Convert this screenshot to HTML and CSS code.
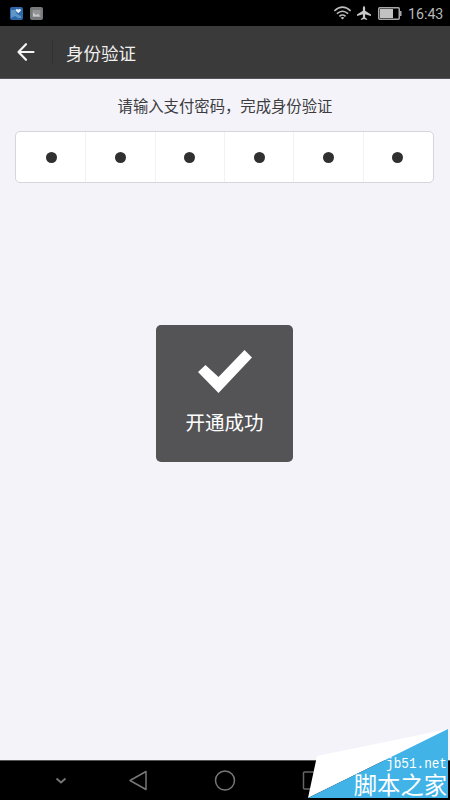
FILE: index.html
```html
<!DOCTYPE html>
<html lang="zh-CN">
<head>
<meta charset="UTF-8">
<title>身份验证</title>
<link rel="stylesheet" href="styles.css">
</head>
<body>
<div class="screen">
  <div class="status">
    <svg class="app-icon" viewBox="0 0 13 13"><rect width="13" height="13" rx="2" fill="#2d69a8"/><path d="M1 3h4l2 4 4 2v2H8L5 9 1 11z" fill="#82b3dc" opacity=".6"/><path d="M8.3 6.3 5.8 3.7c-.7-1.5 1.4-2.4 2.5-1 1.2-1.4 3.2-.5 2.5 1z" fill="#e5f1fa"/></svg>
    <svg class="app-icon" viewBox="0 0 13 13"><rect width="13" height="13" rx="2" fill="#77797b"/><rect x="2.5" y="3" width="8" height="7" fill="#929496"/><path d="M3 9.500V5.500l3 2.500 2-1 2.500 2.500z" fill="#c8c8c8"/></svg>
    <div class="status-right">
      <svg class="wifi" viewBox="0 0 20 15" fill="none" stroke="#bdbdbd" stroke-width="1.7"><path d="M1.3 5.2Q10-2.7 18.7 5.2M4 8.2q6-5.2 12 0M6.7 11q3.3-2.7 6.6 0"/><path d="M8 12.5q2-1.3 4 0l-2 2z" fill="#bdbdbd" stroke="none"/></svg>
      <svg class="plane" viewBox="0 0 14 14"><path d="M7 0q1.1.4 1.1 2v2.8L14 8.6V10L8.1 8.2v3.2l2 1.5v1L7 13.1l-3.1.8v-1l2-1.5V8.2L0 10V8.6l5.9-3.8V2Q5.900.4 7 0z" fill="#c9c9c9"/></svg>
      <svg class="battery" viewBox="0 0 24 13"><rect x=".75" y=".75" width="20.5" height="11.500" rx="1" fill="none" stroke="#a9a9a9" stroke-width="1.5"/><rect x="2" y="2" width="13" height="9" fill="#c2c2c2"/><path d="M22 4h1.500v5H22z" fill="#a9a9a9"/></svg>
      <span class="clock">16:43</span>
    </div>
  </div>
  <header class="header">
    <svg class="back" viewBox="0 0 18 18" fill="none" stroke="#f4f4f4" stroke-width="2.200" stroke-linecap="round" stroke-linejoin="round"><path d="M9 1.200 1.500 9 9 16.800M1.500 9h15"/></svg>
    <span class="divider"></span>
    <h1>身份验证</h1>
  </header>
  <main class="content">
    <p class="prompt">请输入支付密码，完成身份验证</p>
    <div class="password">
      <span class="cell"><i></i></span><span class="cell"><i></i></span><span class="cell"><i></i></span><span class="cell"><i></i></span><span class="cell"><i></i></span><span class="cell"><i></i></span>
    </div>
    <div class="toast">
      <svg class="check" viewBox="0 0 54 44"><path d="M0 22 7.500 15 20.500 27 46.500 0 54 7.500 20.500 43z" fill="#fff"/></svg>
      <span>开通成功</span>
    </div>
  </main>
  <nav class="navbar">
    <svg viewBox="0 0 22 22" fill="none" stroke="#777" stroke-width="1.800"><path d="M6.500 8.500 11 12.500l4.500-4"/></svg>
    <svg viewBox="0 0 22 22" fill="none" stroke="#777" stroke-width="1.500" stroke-linejoin="round"><path d="M14 1.500v18L-2 10.500z"/></svg>
    <svg viewBox="0 0 22 22" fill="none" stroke="#777" stroke-width="1.500"><circle cx="11" cy="10.500" r="9.500"/></svg>
    <svg viewBox="0 0 22 22" fill="none" stroke="#666" stroke-width="1.500"><rect x="7.500" y="2" width="17" height="17" rx="1"/></svg>
  </nav>
  <div class="watermark">
    <svg viewBox="0 0 142 71"><path d="M0 69 9 27 140 0z" fill="#fff"/><path d="M0 69 140 0v69z" fill="#41b3e6"/></svg>
    <span class="site">jb51.net</span>
    <span class="name">脚本之家</span>
  </div>
</div>
</body>
</html>
```
FILE: styles.css
```css
* { box-sizing: border-box; }
body { margin: 0; font-family: "Noto Sans CJK SC", sans-serif; }
.screen { position: relative; width: 450px; height: 800px; overflow: hidden; display: flex; flex-direction: column; background: #f3f3f9; }
svg { display: block; flex: none; overflow: visible; }
.status { height: 26px; flex: none; background: #000; display: flex; align-items: center; gap: 7px; padding: 0 7px 0 10px; }
.app-icon { width: 13px; height: 13px; }
.status-right { margin-left: auto; display: flex; align-items: center; }
.wifi { width: 19px; height: 14px; margin-right: 5px; }
.plane { width: 14px; height: 14px; margin-right: 7px; }
.battery { width: 24px; height: 13px; margin-right: 6px; }
.clock { font: 14.200px/24px Roboto, sans-serif; color: #b8b8b8; width: 35px; padding-top: 2px; white-space: nowrap; }
.header { height: 53px; flex: none; background: #3a3a3a; border-bottom: 1px solid #555; display: flex; align-items: center; padding-left: 17px; }
.back { width: 18px; height: 18px; }
.divider { width: 1px; height: 25px; background: #323232; margin: 0 13px 0 17px; }
h1 { margin: 0; padding-top: 2px; color: #f0f0f0; font-size: 17.500px; line-height: 26px; font-weight: 400; }
.content { flex: 1; display: flex; flex-direction: column; align-items: center; }
.prompt { margin: 14px 0 0; font-size: 15.350px; line-height: 24px; color: #3c3c3e; white-space: nowrap; }
.password { width: 419px; height: 52px; margin: 14px 1px 0 0; display: flex; background: #fff; border: 1px solid #d6d6da; border-radius: 5px; padding: 0 1px; }
.cell { flex: 1; display: flex; align-items: center; justify-content: center; border-right: 1px solid #f2f2f3; }
.cell:last-child { border-right: 0; }
.cell i { width: 11px; height: 11px; border-radius: 50%; background: #303030; }
.toast { width: 137px; height: 137px; margin: 142px 1px 0 0; border-radius: 5px; background: #545456; color: #fff; display: flex; flex-direction: column; align-items: center; padding-top: 25px; font-size: 19.500px; line-height: 28px; }
.check { width: 54px; height: 44px; margin-bottom: 14px; }
.navbar { height: 40px; flex: none; background: #000; border-top: 1px solid #555; display: flex; align-items: center; gap: 60px; padding-left: 50px; }
.navbar svg { width: 22px; height: 22px; }
.watermark { position: absolute; left: 308px; top: 729px; width: 142px; height: 71px; color: #fff; }
.watermark svg { width: 142px; height: 71px; }
.site, .name { position: absolute; right: 3px; white-space: nowrap; }
.site { top: 30px; font: 12.700px/12px "Liberation Mono", monospace; transform: scaleY(1.15); }
.name { top: 43px; right: 3px; font-size: 23.300px; line-height: 24px; }
```
